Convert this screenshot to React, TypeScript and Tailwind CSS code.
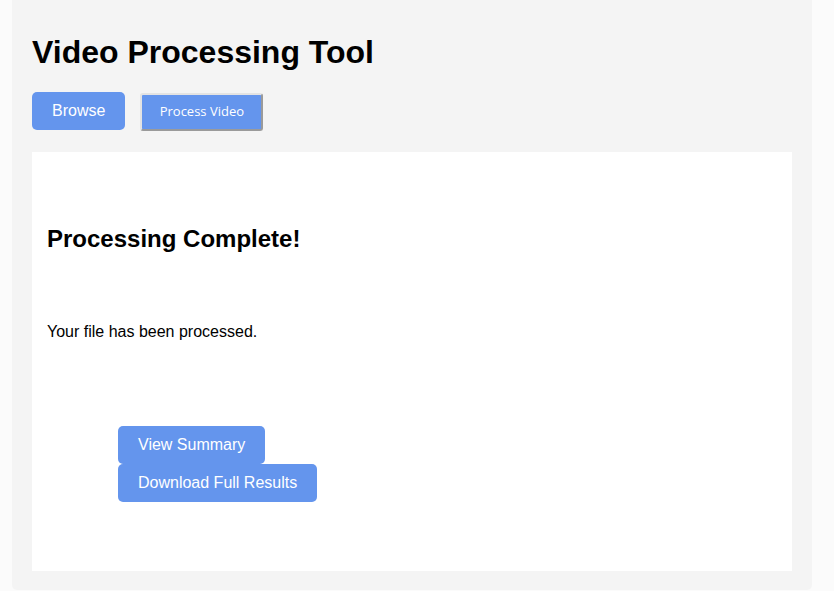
import React from 'react';

export default function App() {
  const arial = { fontFamily: '"Liberation Sans", Arial, sans-serif' };
  return (
    <div className="min-h-[591px] w-full bg-[#fbfbfb]" style={arial}>
      <div className="ml-[12px] w-[800px] rounded-b-[5px] bg-[#f4f4f4] px-[20px] pt-[34px] pb-[19px]">
        <h1 className="text-[32px] leading-[37px] font-bold text-black">Video Processing Tool</h1>

        <div className="mt-[21px] flex items-start">
          <button className="h-[38px] rounded-[5px] bg-[#6495ed] px-[20px] text-[16px] leading-[18px] text-white">
            Browse
          </button>
          <button
            className="ml-[15px] mt-[1px] flex h-[38px] w-[123px] items-center justify-center rounded-[3px] border-2 border-t-[#e3e3e3] border-l-[#e3e3e3] border-r-[#9a9a9a] border-b-[#9a9a9a] bg-[#6495ed] text-[13px] text-white"
            style={{ fontFamily: '"Open Sans", "Noto Sans", sans-serif' }}
          >
            Process Video
          </button>
        </div>

        <div className="mt-[21px] h-[419px] bg-white px-[15px] pt-[73px]">
          <h2 className="text-[24px] leading-[28px] font-bold text-black">Processing Complete!</h2>
          <p className="mt-[70px] text-[16px] leading-[18px] text-black">Your file has been processed.</p>
          <div className="mt-[85px] ml-[71px] flex flex-col items-start">
            <button className="h-[38px] rounded-[5px] bg-[#6495ed] px-[20px] text-[16px] leading-[18px] text-white">
              View Summary
            </button>
            <button className="h-[38px] rounded-[5px] bg-[#6495ed] px-[20px] text-[16px] leading-[18px] text-white">
              Download Full Results
            </button>
          </div>
        </div>
      </div>
    </div>
  );
}
